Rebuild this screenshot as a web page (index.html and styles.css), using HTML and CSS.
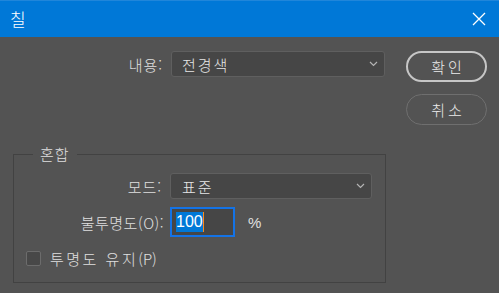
FILE: index.html
```html
<!DOCTYPE html>
<html lang="ko">
    <head>
        <meta charset="UTF-8">
        <meta name="viewport" content="width=device-width, initial-scale=1.0">
        <title>칠</title>
        <link rel="stylesheet" href="styles.css">
    </head>
    <body>
        <div class="titlebar">
            <span class="title">칠</span>
            <svg class="close" width="14" height="14" viewBox="0 0 14 14">
                <path d="M1 1 L13 13 M13 1 L1 13" stroke="#ffffff" stroke-width="1.3" fill="none"/>
            </svg>
        </div>

        <div class="dialog">
            <div class="form">
                <div class="row top-row">
                    <label class="label">내용:</label>
                    <div class="select wide">
                        <span>전경색</span>
                        <svg class="chevron" width="9" height="6" viewBox="0 0 9 6">
                            <path d="M1 1 L4.5 4.5 L8 1" stroke="#b4b4b4" stroke-width="1.2" fill="none"/>
                        </svg>
                    </div>
                </div>

                <fieldset class="group">
                    <legend class="legend">혼합</legend>
                    <div class="row">
                        <label class="label">모드:</label>
                        <div class="select narrow">
                            <span>표준</span>
                            <svg class="chevron" width="9" height="6" viewBox="0 0 9 6">
                                <path d="M1 1 L4.5 4.5 L8 1" stroke="#b4b4b4" stroke-width="1.2" fill="none"/>
                            </svg>
                        </div>
                    </div>
                    <div class="row opacity-row">
                        <label class="label">불투명도(O):</label>
                        <div class="input"><span class="selected">100</span><span class="caret"></span></div>
                        <span class="unit">%</span>
                    </div>
                    <div class="check-row">
                        <span class="checkbox"></span>
                        <span class="check-label">투명도 유지<span class="key">(P)</span></span>
                    </div>
                </fieldset>
            </div>

            <div class="buttons">
                <button class="button primary">확인</button>
                <button class="button">취소</button>
            </div>
        </div>
    </body>
</html>
```

FILE: styles.css
```css
body {
    margin: 0;
    background-color: #535353;
    font-family: "Noto Sans CJK KR", "Noto Sans", sans-serif;
    font-weight: 300;
    color: #e0e0e0;
    height: 293px;
    overflow: hidden;
}
.titlebar {
    height: 36px;
    background-color: #0078d7;
    border-top: 1px solid #2086da;
    display: flex;
    align-items: center;
    justify-content: space-between;
    padding: 0 13px 0 10px;
}
.title {
    color: #ffffff;
    font-size: 17px;
    margin-top: -1px;
}
.close {
    display: block;
}
.dialog {
    display: flex;
    padding: 14px 0 0 13px;
}
.form {
    width: 373px;
}
.row {
    display: flex;
    align-items: center;
}
.label {
    font-size: 15px;
    letter-spacing: 1px;
    text-align: right;
    flex: none;
}
.top-row .label {
    width: 150px;
    margin-right: 8px;
}
.select {
    box-sizing: border-box;
    height: 26px;
    background-color: #464646;
    border: 1px solid #5f5f5f;
    border-radius: 3px;
    display: flex;
    align-items: center;
    justify-content: space-between;
    padding: 0 6px 0 10px;
    font-size: 15px;
    letter-spacing: 2px;
    color: #e6e6e6;
}
.wide {
    width: 214px;
}
.narrow {
    width: 202px;
    padding-left: 11px;
}
.chevron {
    display: block;
}
.group {
    margin: 67px 0 0 0;
    padding: 0 0 13px 0;
    border: 1px solid #424242;
    border-radius: 0;
    min-width: 0;
}
.legend {
    font-size: 15px;
    letter-spacing: 1px;
    margin-left: 19px;
    padding: 0 7px;
    line-height: 20px;
}
.group .label {
    width: 148px;
    margin-right: 8px;
}
.group .row {
    margin-top: 9px;
}
.group .opacity-row {
    margin-top: 8px;
}
.opacity-row .label {
    width: 150px;
    margin-right: 6px;
    letter-spacing: 0.5px;
}
.input {
    box-sizing: border-box;
    width: 65px;
    height: 30px;
    background-color: #464646;
    border: 2px solid #1473e6;
    display: flex;
    align-items: center;
    padding-left: 4px;
    font-family: "Liberation Sans", "Noto Sans", sans-serif;
    font-weight: 400;
    font-size: 16px;
}
.selected {
    background-color: #0078d7;
    color: #ffffff;
    line-height: 20px;
}
.caret {
    width: 1px;
    height: 20px;
    background-color: #ff8c1a;
}
.unit {
    margin-left: 13px;
    font-size: 15px;
    font-family: "Liberation Sans", "Noto Sans", sans-serif;
    font-weight: 400;
}
.check-row {
    display: flex;
    align-items: center;
    margin: 11px 0 0 12px;
}
.checkbox {
    box-sizing: border-box;
    width: 15px;
    height: 15px;
    background-color: #484848;
    border: 1px solid #6c6c6c;
    border-radius: 2px;
}
.check-label {
    margin-left: 9px;
    font-size: 15px;
    letter-spacing: 2.5px;
}
.key {
    letter-spacing: 0;
}
.buttons {
    display: flex;
    flex-direction: column;
    gap: 12px;
    margin-left: 20px;
}
.button {
    box-sizing: border-box;
    width: 81px;
    height: 31px;
    border-radius: 16px;
    background: transparent;
    border: 1px solid #6f6f6f;
    color: #ececec;
    font-family: "Noto Sans CJK KR", "Noto Sans", sans-serif;
    font-weight: 300;
    font-size: 15px;
    letter-spacing: 3px;
    padding: 0 0 0 3px;
}
.primary {
    border: 2px solid #c6c6c6;
}
```
